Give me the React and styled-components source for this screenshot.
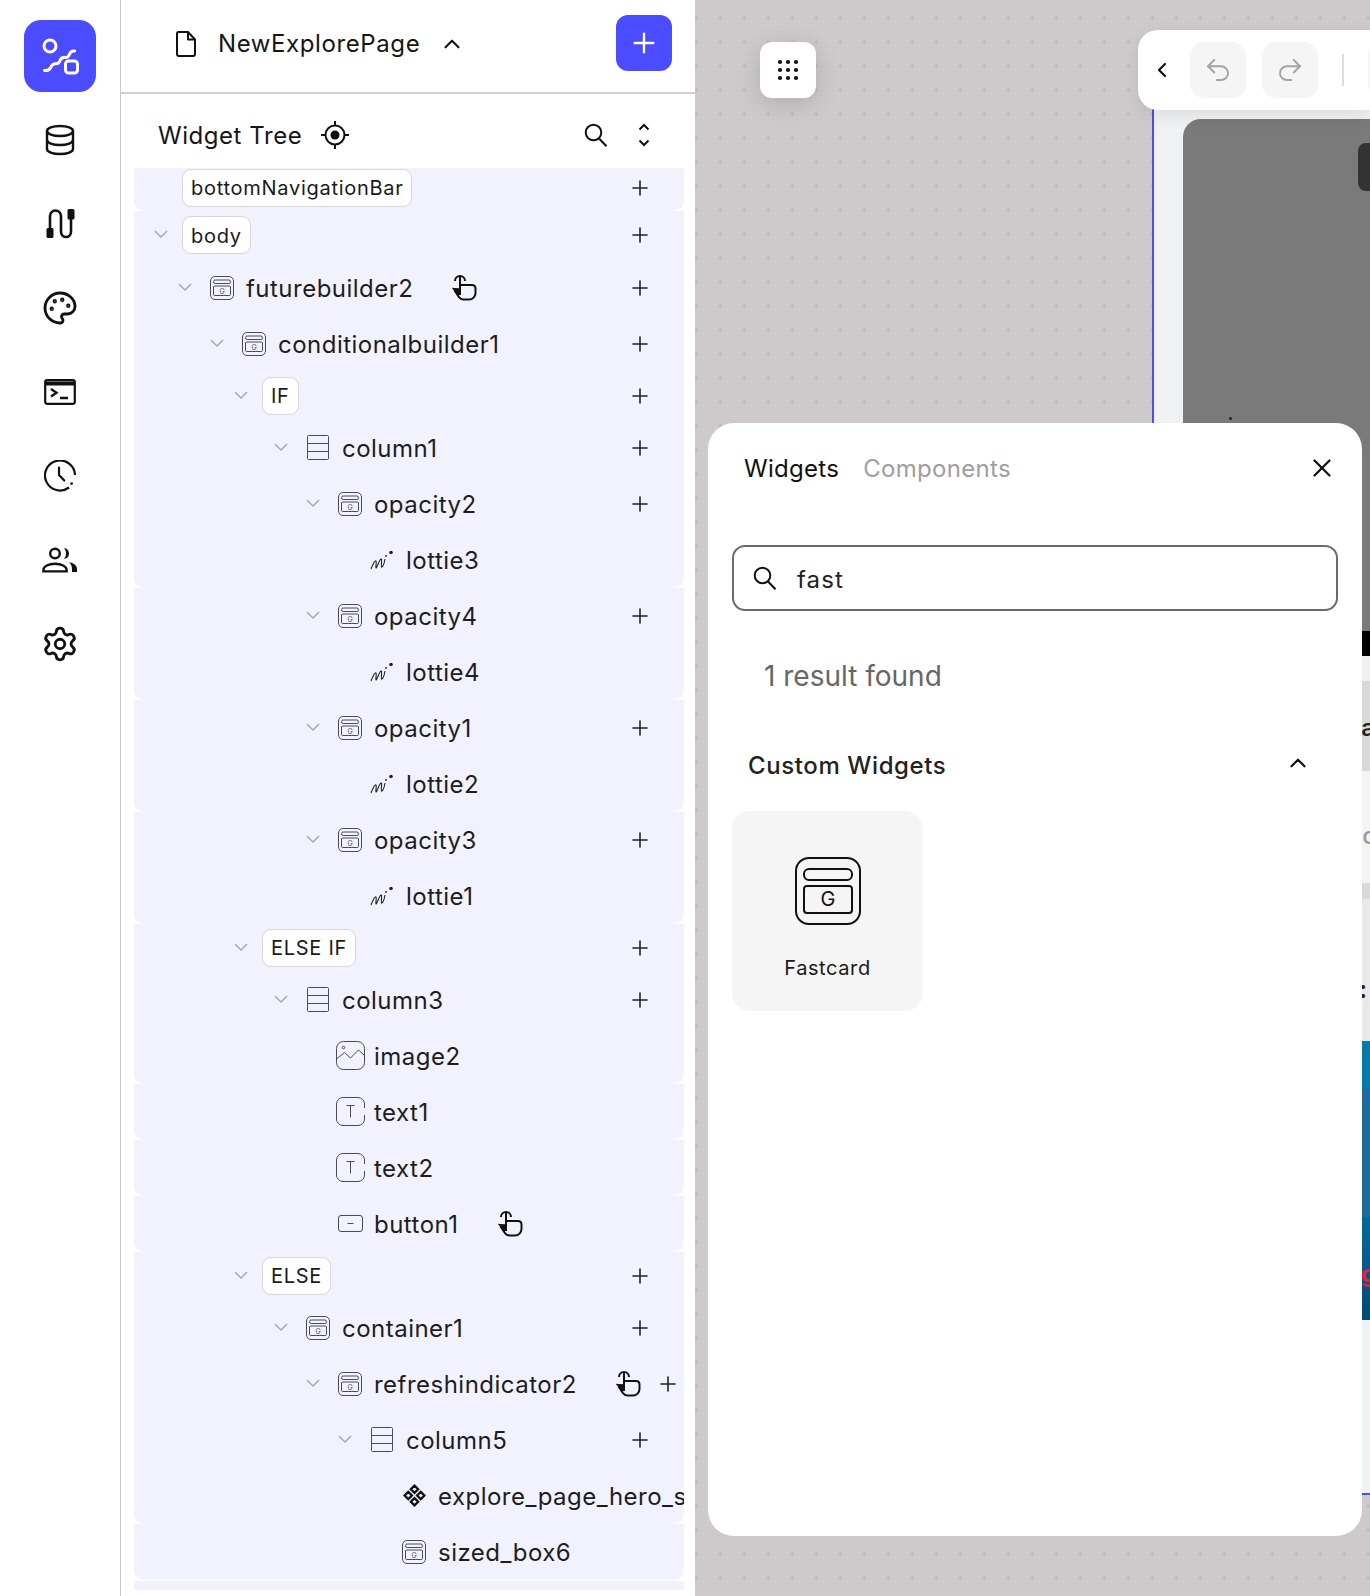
import React from "react";
import styled, { createGlobalStyle } from "styled-components";
import { Plus, Palette, Settings, Undo2, Redo2, X, ChevronLeft, ChevronUp } from "lucide-react";

const Global = createGlobalStyle`
  html, body { margin: 0; padding: 0; background: #fff; }
  body { font-family: "Inter", "Liberation Sans", sans-serif; color: #161616; }
  * { box-sizing: border-box; }
`;

const Page = styled.div`
  display: flex;
  width: 1370px;
  height: 1596px;
  overflow: hidden;
`;

/* ---------- rail ---------- */
const Rail = styled.nav`
  flex: 0 0 121px;
  border-right: 1px solid #c9c9c9;
  display: flex;
  flex-direction: column;
  align-items: center;
  padding-top: 20px;
  background: #fff;
`;
const RailItem = styled.div`
  width: 72px;
  height: 72px;
  margin-bottom: 12px;
  border-radius: 17px;
  display: flex;
  align-items: center;
  justify-content: center;
  color: ${(p) => (p.$active ? "#fff" : "#111")};
  background: ${(p) => (p.$active ? "#4b4bff" : "transparent")};
`;

/* ---------- tree panel ---------- */
const TreePanel = styled.aside`
  flex: 0 0 574px;
  display: flex;
  flex-direction: column;
  background: #fff;
  overflow: hidden;
`;
const PageHeader = styled.header`
  height: 94px;
  flex: none;
  border-bottom: 2px solid #cfcfcf;
  display: flex;
  align-items: center;
  padding: 0 23px 5px 55px;
`;
const PageName = styled.span`
  font-size: 24px;
  letter-spacing: 0.6px;
  margin-left: 22px;
  margin-right: 19px;
`;
const AddButton = styled.button`
  margin: -2px 0 0 auto;
  width: 56px;
  height: 56px;
  border: 0;
  padding: 0;
  border-radius: 12px;
  background: #4b4bff;
  color: #fff;
  display: flex;
  align-items: center;
  justify-content: center;
`;
const TreeHeader = styled.div`
  height: 74px;
  flex: none;
  display: flex;
  align-items: center;
  padding: 8px 45px 0 37px;
`;
const TreeTitle = styled.h2`
  margin: 0 19px 0 0;
  font-size: 24px;
  font-weight: 400;
  letter-spacing: 0.55px;
`;
const TreeTools = styled.div`
  margin-left: auto;
  display: flex;
  align-items: center;
  gap: 30px;
`;
const TreeList = styled.div`
  margin: 0 11px 0 13px;
  display: flex;
  flex-direction: column;
`;
const Row = styled.div`
  height: ${(p) => p.$h}px;
  flex: none;
  display: flex;
  align-items: center;
  padding-left: ${(p) => p.$indent}px;
  padding-bottom: ${(p) => p.$pb || 0}px;
  background: #f2f2fe;
  border-bottom: 1px solid #f5f5ff;
  border-radius: ${(p) => (p.$leaf ? "0 0 10px 10px" : "0")};
  overflow: hidden;
`;
const Stub = styled.div`
  height: 9px;
  margin-top: 1px;
  background: #f2f2fe;
`;
const Slot = styled.span`
  flex: 0 0 ${(p) => p.$w}px;
  display: flex;
  align-items: center;
  height: 14px;
  margin-top: -2px;
`;
const IconBox = styled.span`
  flex: 0 0 24px;
  min-width: 0;
  width: 24px;
  height: 30px;
  margin-right: 12px;
  display: flex;
  align-items: center;
  justify-content: center;
  color: #4a4a55;
  & > svg { flex: none; }
`;
const Label = styled.span`
  flex: none;
  padding-top: 2px;
  font-size: 24px;
  letter-spacing: 0.48px;
  white-space: nowrap;
  color: #1d1d1f;
`;
const Chip = styled.span`
  flex: none;
  height: 38px;
  padding: 1px 8px 0;
  display: flex;
  align-items: center;
  background: #fff;
  border: 1.5px solid #d6d6d6;
  border-radius: 9px;
  font-size: 20px;
  letter-spacing: 0.72px;
  color: #1a1a1a;
`;
const PointerBox = styled.span`
  flex: none;
  margin: -3px 0 0 39px;
  display: flex;
  color: #111;
`;
const PlusBox = styled.span`
  flex: none;
  margin-left: auto;
  margin-right: ${(p) => (p.$near ? 4 : 32)}px;
  display: flex;
  color: #222;
`;

/* ---------- canvas ---------- */
const Canvas = styled.main`
  position: relative;
  flex: 1;
  overflow: hidden;
  background-color: #cfcacb;
  background-image:
    radial-gradient(circle, #bfbabb 1.5px, transparent 1.8px),
    repeating-linear-gradient(90deg, rgba(255,255,255,.035) 0 1px, transparent 1px 2px),
    repeating-linear-gradient(0deg, rgba(0,0,0,.02) 0 1px, transparent 1px 2px);
  background-size: 24px 24px, auto, auto;
  background-position: 13.4px 6px, 0 0, 0 0;
`;
const GridButton = styled.button`
  position: absolute;
  left: 65px;
  top: 42px;
  width: 56px;
  height: 56px;
  padding: 0;
  border: 0;
  border-radius: 12px;
  background: #fff;
  box-shadow: 0 6px 24px rgba(0,0,0,.14);
  display: flex;
  align-items: center;
  justify-content: center;
`;
const Phone = styled.section`
  position: absolute;
  left: 457px;
  right: 0;
  top: 100px;
  height: 1395px;
  background: #f0f1f3;
  border-left: 2px solid #4b4bff;
  border-bottom: 2px solid #4b4bff;
  padding: 19px 0 0 29px;
  display: flex;
  flex-direction: column;
`;
const Band = styled.div`
  flex: none;
  height: ${(p) => p.$h}px;
  background: ${(p) => p.$bg};
  border-top-left-radius: ${(p) => p.$r || 0}px;
  display: flex;
  align-items: center;
  justify-content: flex-end;
  overflow: hidden;
`;
const BandText = styled.span`
  font-size: 24px;
  font-weight: ${(p) => p.$w || 500};
  color: ${(p) => p.$c};
  white-space: nowrap;
  margin-right: ${(p) => p.$mr}px;
  margin-top: ${(p) => p.$mt}px;
`;
const Notch = styled.div`
  position: absolute;
  right: 0;
  top: 43px;
  width: 12px;
  height: 48px;
  border-radius: 8px 0 0 8px;
  background: #333;
`;
const Speck = styled.div`
  position: absolute;
  left: 75px;
  top: 317px;
  width: 3px;
  height: 3px;
  border-radius: 50%;
  background: #222;
`;
const Toolbar = styled.div`
  position: absolute;
  left: 443px;
  right: 0;
  top: 30px;
  height: 80px;
  padding-left: 12px;
  background: #fff;
  border-radius: 20px 0 0 20px;
  box-shadow: 0 6px 18px rgba(0,0,0,.08);
  display: flex;
  align-items: center;
  overflow: hidden;
`;
const BackBox = styled.span`
  flex: none;
  display: flex;
  color: #111;
`;
const ToolButton = styled.button`
  flex: none;
  width: 56px;
  height: 56px;
  padding: 0;
  border: 0;
  margin-left: ${(p) => p.$ml}px;
  border-radius: 14px;
  background: #f5f5f5;
  color: #a3a3a3;
  display: flex;
  align-items: center;
  justify-content: center;
`;
const ToolDivider = styled.span`
  flex: none;
  width: 2px;
  height: 32px;
  margin-left: 24px;
  background: #dcdcdc;
`;

/* ---------- widgets drawer ---------- */
const Drawer = styled.section`
  position: absolute;
  left: 13px;
  top: 423px;
  width: 654px;
  height: 1113px;
  background: #fff;
  border-radius: 26px;
  padding: 0 24px;
  display: flex;
  flex-direction: column;
`;
const Tabs = styled.div`
  height: 90px;
  flex: none;
  display: flex;
  align-items: center;
  padding: 0 1px 0 12px;
  gap: 24px;
`;
const Tab = styled.span`
  font-size: 24px;
  letter-spacing: 0.3px;
  color: ${(p) => (p.$on ? "#111" : "#9e9e9e")};
`;
const CloseBox = styled.span`
  margin-left: auto;
  display: flex;
  color: #111;
`;
const SearchBox = styled.div`
  flex: none;
  margin-top: 32px;
  height: 66px;
  border: 2px solid #6b6b6b;
  border-radius: 13px;
  display: flex;
  align-items: center;
  padding-left: 19px;
  gap: 20px;
`;
const SearchValue = styled.span`
  padding-top: 2px;
  font-size: 24px;
  letter-spacing: 1.1px;
  color: #222;
`;
const ResultCount = styled.div`
  margin: 47px 0 0 32px;
  font-size: 28px;
  line-height: 36px;
  color: #666;
`;
const SectionHead = styled.div`
  margin-top: 53px;
  height: 36px;
  display: flex;
  align-items: center;
  padding: 0 27px 0 16px;
`;
const SectionTitle = styled.h3`
  margin: 0;
  font-size: 24px;
  font-weight: 500;
  letter-spacing: 0.6px;
  color: #222;
`;
const SectionToggle = styled.span`
  margin: -4px 0 0 auto;
  display: flex;
  color: #111;
`;
const Card = styled.div`
  margin-top: 28px;
  width: 191px;
  height: 200px;
  border-radius: 18px;
  background: #f5f5f5;
  display: flex;
  flex-direction: column;
  align-items: center;
  padding-top: 46px;
`;
const CardLabel = styled.span`
  margin-top: 31px;
  font-size: 20px;
  letter-spacing: 0.6px;
  color: #1a1a1a;
`;

/* ---------- drawings ---------- */
const FlowIcon = () => (
  <svg width="72" height="72" viewBox="0 0 72 72" fill="none" stroke="currentColor" strokeWidth="3">
    <circle cx="26" cy="26" r="6" />
    <rect x="41.5" y="41" width="12" height="12" rx="3" />
    <path d="M20.5 50.5c3 .3 5-.6 6.2-3 1.2-2.6 2.4-4 5-3.7 2.4.2 3.6-1 4.4-3.2 1-2.6 2.6-3.4 5-3.2 2.4.3 3.6-1 4.4-3.2.9-2.4 2.4-3.4 5.2-3.2" strokeLinecap="round" />
  </svg>
);
const DbIcon = () => (
  <svg width="32" height="32" viewBox="0 0 32 32" fill="none" stroke="currentColor" strokeWidth="2.4">
    <ellipse cx="16" cy="7" rx="13" ry="5" />
    <path d="M3 7v18c0 2.8 5.8 5 13 5s13-2.2 13-5V7" />
    <path d="M3 16c0 2.8 5.8 5 13 5s13-2.2 13-5" />
  </svg>
);
const ApiIcon = () => (
  <svg width="32" height="32" viewBox="0 0 32 32" fill="none" stroke="currentColor" strokeWidth="2.6">
    <path d="M6 21V8a5.500 5.500 0 0 1 11 0v16a5 5 0 0 0 10 0V11" />
    <rect x="2.5" y="20" width="7" height="10" rx="1.5" fill="currentColor" stroke="none" />
    <rect x="23.5" y="1" width="7" height="10.5" rx="1.5" fill="currentColor" stroke="none" />
  </svg>
);
const TermIcon = () => (
  <svg width="32" height="26" viewBox="0 0 32 26" fill="none" stroke="currentColor" strokeWidth="2.2">
    <rect x="1.2" y="1.2" width="29.6" height="23.6" rx="2" />
    <path d="M1 4.5h30" strokeWidth="4" />
    <path d="M7 10l5.5 3.8L7 17.6M16 19h8" strokeWidth="2.4" />
  </svg>
);
const ClockIcon = () => (
  <svg width="32" height="32" viewBox="0 0 32 32" fill="none" stroke="currentColor" strokeWidth="2.2">
    <path d="M25 27.5A15 15 0 1 1 31 15" />
    <path d="M15 7.5v7.5l5.3 5.5" strokeLinecap="round" />
    <circle cx="27.6" cy="23.6" r="1.4" fill="currentColor" stroke="none" />
  </svg>
);
const UsersIcon = () => (
  <svg width="36" height="26" viewBox="0 0 36 26" fill="none" stroke="currentColor" strokeWidth="2.4">
    <circle cx="13" cy="6.5" r="4.8" />
    <path d="M1.4 24.4v-1.4c0-3.8 5.2-6.2 11.6-6.2s11.6 2.400 11.6 6.2v1.400z" />
    <path d="M22 1c3.600.4 5 3 5 5.500s-1.400 5-5 5.500c1.400-1.600 2-3.500 2-5.500s-.6-3.900-2-5.500z" fill="currentColor" stroke="none" />
    <path d="M27 15c4.500.8 8 3.500 8 7v3h-5v-3c0-2.500-1-5-3-7z" fill="currentColor" stroke="none" />
  </svg>
);
const FileIcon = () => (
  <svg width="20" height="26" viewBox="0 0 20 26" fill="none" stroke="#111" strokeWidth="2" strokeLinejoin="round">
    <path d="M2.500 1h9.500l7 7.500v14.500a2 2 0 0 1-2 2H3a2 2 0 0 1-2-2V2.500A1.500 1.500 0 0 1 2.500 1z" />
    <path d="M12 1v7.500h7" />
  </svg>
);
const LocateIcon = () => (
  <svg width="28" height="28" viewBox="0 0 28 28" fill="none" stroke="#111" strokeWidth="2">
    <circle cx="14" cy="14" r="9.500" />
    <circle cx="14" cy="14" r="4.500" fill="#111" stroke="none" />
    <path d="M14 0v4.500M14 23.500V28M0 14h4.500M23.500 14H28" />
  </svg>
);
const SearchIcon = () => (
  <svg width="24" height="24" viewBox="0 0 24 24" fill="none" stroke="#111" strokeWidth="2">
    <circle cx="9.500" cy="9.500" r="7.800" />
    <path d="M15 15.500l7.500 7.800" />
  </svg>
);
const ExpandIcon = () => (
  <svg width="12" height="24" viewBox="0 0 12 24" fill="none" stroke="#111" strokeWidth="2">
    <path d="M1.500 6.500L6 2l4.500 4.500M1.500 17.500L6 22l4.500-4.500" />
  </svg>
);
const Caret = () => (
  <svg width="14" height="8" viewBox="0 0 14 8" fill="none" stroke="#adadad" strokeWidth="1.600">
    <path d="M1 1l6 6 6-6" />
  </svg>
);
const PointerIcon = () => (
  <svg width="25" height="29" viewBox="12 8 25 29" fill="none" stroke="currentColor" strokeWidth="2">
    <path d="M15 17a5 5 0 1 1 10 0" />
    <path d="M20 12.500V31" />
    <path d="M20 21h12c2 0 3.500 1.500 3.500 3.500V29a6.500 6.500 0 0 1-6.500 6.500h-5.500c-2 0-3.400-.8-4.500-2.300L14.500 26.500" />
    <path d="M14 25l4.500.3-.3 4.500z" fill="currentColor" />
  </svg>
);
const WidgetIcon = ({ size = 24, sw = 1 }) => (
  <svg width={size} height={size} viewBox="0 0 24 24" fill="none" stroke="currentColor" strokeWidth={sw}>
    <rect x="0.500" y="0.500" width="23" height="23" rx="4.500" />
    <rect x="3.500" y="4" width="17" height="3.500" rx="1.700" />
    <rect x="3.500" y="10" width="17" height="9.500" rx="1" />
    <text x="12" y="17.600" textAnchor="middle" fontFamily="Inter, sans-serif" fontSize="7" fill="currentColor" stroke="none">G</text>
  </svg>
);
const LargeWidgetIcon = () => (
  <svg width="66" height="68" viewBox="0 0 66 68" fill="none" stroke="#111" strokeWidth="2">
    <rect x="1" y="1" width="64" height="66" rx="13" />
    <rect x="9" y="12" width="48" height="11" rx="5" />
    <rect x="9" y="29" width="48" height="27" rx="3" />
    <text x="33" y="49" textAnchor="middle" fontFamily="Inter, sans-serif" fontSize="20" fill="#111" stroke="none">G</text>
  </svg>
);
const ColumnIcon = () => (
  <svg width="22" height="25" viewBox="0 0 22 25" fill="none" stroke="currentColor" strokeWidth="1">
    <rect x="0.500" y="0.500" width="21" height="24" rx="1" />
    <path d="M0.500 8.500h21M0.500 16.500h21" />
  </svg>
);
const LottieIcon = () => (
  <svg width="24" height="20" viewBox="0 0 24 20" fill="none" stroke="#222" strokeWidth="1.100">
    <path d="M1 19c2-5 4-9 5-8 1 .8-.8 6 0 7 .8.600 3-8 5-9 1.500-.4-.3 7 .5 8 1 1 3-4 3.500-8" />
    <circle cx="21" cy="2.500" r="1.800" fill="#222" stroke="none" />
    <circle cx="16" cy="6" r=".9" fill="#222" stroke="none" />
  </svg>
);
const ImageIcon = () => (
  <svg width="29" height="29" viewBox="0 0 29 29" fill="none" stroke="currentColor" strokeWidth="1">
    <rect x="0.500" y="0.500" width="28" height="28" rx="7" />
    <circle cx="7.500" cy="6.500" r="1.300" />
    <path d="M0.500 18l8-6.500 6 5.500 8-8 6 5.500" />
  </svg>
);
const TextIcon = () => (
  <svg width="29" height="29" viewBox="0 0 29 29" fill="none" stroke="currentColor" strokeWidth="1">
    <path d="M28.500 11V7a6.500 6.500 0 0 0-6.500-6.500H7A6.500 6.500 0 0 0 .5 7v15A6.500 6.500 0 0 0 7 28.500h15a6.500 6.500 0 0 0 6.500-6.500v-4" />
    <path d="M10.500 8.500h8M14.500 8.500v12" />
  </svg>
);
const ButtonIcon = () => (
  <svg width="25" height="17" viewBox="0 0 25 17" fill="none" stroke="currentColor" strokeWidth="1">
    <rect x="0.500" y="0.500" width="24" height="16" rx="2.500" />
    <path d="M9.500 8.500h6" />
  </svg>
);
const ComponentIcon = () => (
  <svg width="25" height="25" viewBox="0 0 24 24" fill="none" stroke="#111" strokeWidth="2.200">
    <path d="M12 2.500l3.500 3.500L12 9.500 8.500 6zM12 14.500l3.500 3.500L12 21.500 8.500 18zM6 8.500L9.500 12 6 15.500 2.500 12zM18 8.500l3.500 3.500-3.500 3.500-3.500-3.500z" />
  </svg>
);
const DotsIcon = () => (
  <svg width="22" height="22" viewBox="0 0 22 22" fill="#111">
    {[3, 11, 19].flatMap((y) =>
      [3, 11, 19].map((x) => <circle key={`${x}-${y}`} cx={x} cy={y} r="2.100" />)
    )}
  </svg>
);

const ICONS = {
  w: <WidgetIcon />,
  col: <ColumnIcon />,
  lot: <LottieIcon />,
  img: <ImageIcon />,
  txt: <TextIcon />,
  btn: <ButtonIcon />,
  cmp: <ComponentIcon />,
};

const rows = [
  { chip: "bottomNavigationBar", indent: 20, h: 43, pb: 3, leaf: true, plus: true, nocaret: true },
  { chip: "body", indent: 20, h: 49, plus: true },
  { icon: "w", label: "futurebuilder2", indent: 44, caret: true, plus: true, pointer: true },
  { icon: "w", label: "conditionalbuilder1", indent: 76, caret: true, plus: true },
  { chip: "IF", indent: 100, h: 48, plus: true },
  { icon: "col", label: "column1", indent: 140, caret: true, plus: true },
  { icon: "w", label: "opacity2", indent: 172, caret: true, plus: true },
  { icon: "lot", label: "lottie3", indent: 204, leaf: true },
  { icon: "w", label: "opacity4", indent: 172, caret: true, plus: true },
  { icon: "lot", label: "lottie4", indent: 204, leaf: true },
  { icon: "w", label: "opacity1", indent: 172, caret: true, plus: true },
  { icon: "lot", label: "lottie2", indent: 204, leaf: true },
  { icon: "w", label: "opacity3", indent: 172, caret: true, plus: true },
  { icon: "lot", label: "lottie1", indent: 204, leaf: true },
  { chip: "ELSE IF", indent: 100, h: 48, plus: true },
  { icon: "col", label: "column3", indent: 140, caret: true, plus: true },
  { icon: "img", label: "image2", indent: 172, leaf: true },
  { icon: "txt", label: "text1", indent: 172, leaf: true },
  { icon: "txt", label: "text2", indent: 172, leaf: true },
  { icon: "btn", label: "button1", indent: 172, leaf: true, pointer: true },
  { chip: "ELSE", indent: 100, h: 48, plus: true },
  { icon: "w", label: "container1", indent: 140, caret: true, plus: true },
  { icon: "w", label: "refreshindicator2", indent: 172, caret: true, plus: true, pointer: true, near: true },
  { icon: "col", label: "column5", indent: 204, caret: true, plus: true },
  { icon: "cmp", label: "explore_page_hero_section", indent: 236, leaf: true },
  { icon: "w", label: "sized_box6", indent: 236, leaf: true },
];

const TreeRow = ({ r }) => (
  <Row $h={r.h || 56} $indent={r.indent} $pb={r.pb} $leaf={r.leaf}>
    {r.chip ? (
      <>
        <Slot $w={28}>{!r.nocaret && <Caret />}</Slot>
        <Chip>{r.chip}</Chip>
      </>
    ) : (
      <>
        <Slot $w={32}>{r.caret && <Caret />}</Slot>
        <IconBox>{ICONS[r.icon]}</IconBox>
        <Label>{r.label}</Label>
      </>
    )}
    {r.pointer && (
      <PointerBox>
        <PointerIcon />
      </PointerBox>
    )}
    {r.plus && (
      <PlusBox $near={r.near}>
        <Plus size={24} strokeWidth={1.6} />
      </PlusBox>
    )}
  </Row>
);

const bands = [
  { h: 512, bg: "#7a7a7a", r: 18 },
  { h: 25, bg: "#000" },
  { h: 25, bg: "#f0f0f0" },
  { h: 90, bg: "#d9d9d9", text: "ca", c: "#222", w: 600, mr: -5, mt: 2 },
  { h: 112, bg: "#f3f3f3", text: "nc", c: "#9a9a9a", w: 500, mr: -6, mt: 16 },
  { h: 16, bg: "#d9d9d9" },
  { h: 142, bg: "#e8e8ea", text: ":", c: "#222", w: 700, mr: 3, mt: 38 },
  { h: 48, bg: "#0a78a8" },
  { h: 128, bg: "#1f6a99" },
  { h: 103, bg: "linear-gradient(#056a98, #034a70)", text: "g", c: "#e0203c", w: 700, mr: -6, mt: 10 },
];

export default function App() {
  return (
    <Page>
      <Global />
      <Rail>
        <RailItem $active><FlowIcon /></RailItem>
        <RailItem><DbIcon /></RailItem>
        <RailItem><ApiIcon /></RailItem>
        <RailItem><Palette size={36} strokeWidth={1.9} /></RailItem>
        <RailItem><TermIcon /></RailItem>
        <RailItem><ClockIcon /></RailItem>
        <RailItem><UsersIcon /></RailItem>
        <RailItem><Settings size={38} strokeWidth={1.8} /></RailItem>
      </Rail>

      <TreePanel>
        <PageHeader>
          <FileIcon />
          <PageName>NewExplorePage</PageName>
          <ChevronUp size={26} strokeWidth={2} />
          <AddButton><Plus size={32} strokeWidth={1.8} /></AddButton>
        </PageHeader>
        <TreeHeader>
          <TreeTitle>Widget Tree</TreeTitle>
          <LocateIcon />
          <TreeTools>
            <SearchIcon />
            <ExpandIcon />
          </TreeTools>
        </TreeHeader>
        <TreeList>
          {rows.map((r) => (
            <TreeRow key={r.label || r.chip} r={r} />
          ))}
          <Stub />
        </TreeList>
      </TreePanel>

      <Canvas>
        <GridButton><DotsIcon /></GridButton>
        <Phone>
          {bands.map((b, i) => (
            <Band key={i} $h={b.h} $bg={b.bg} $r={b.r}>
              {b.text && <BandText $c={b.c} $w={b.w} $mr={b.mr} $mt={b.mt}>{b.text}</BandText>}
            </Band>
          ))}
          <Notch />
          <Speck />
        </Phone>
        <Toolbar>
          <BackBox><ChevronLeft size={24} strokeWidth={2.2} /></BackBox>
          <ToolButton $ml={16}><Undo2 size={30} strokeWidth={1.5} /></ToolButton>
          <ToolButton $ml={16}><Redo2 size={30} strokeWidth={1.5} /></ToolButton>
          <ToolDivider />
          <ToolButton $ml={24} />
        </Toolbar>
        <Drawer>
          <Tabs>
            <Tab $on>Widgets</Tab>
            <Tab>Components</Tab>
            <CloseBox><X size={30} strokeWidth={1.8} /></CloseBox>
          </Tabs>
          <SearchBox>
            <SearchIcon />
            <SearchValue>fast</SearchValue>
          </SearchBox>
          <ResultCount>1 result found</ResultCount>
          <SectionHead>
            <SectionTitle>Custom Widgets</SectionTitle>
            <SectionToggle><ChevronUp size={26} strokeWidth={2} /></SectionToggle>
          </SectionHead>
          <Card>
            <LargeWidgetIcon />
            <CardLabel>Fastcard</CardLabel>
          </Card>
        </Drawer>
      </Canvas>
    </Page>
  );
}
